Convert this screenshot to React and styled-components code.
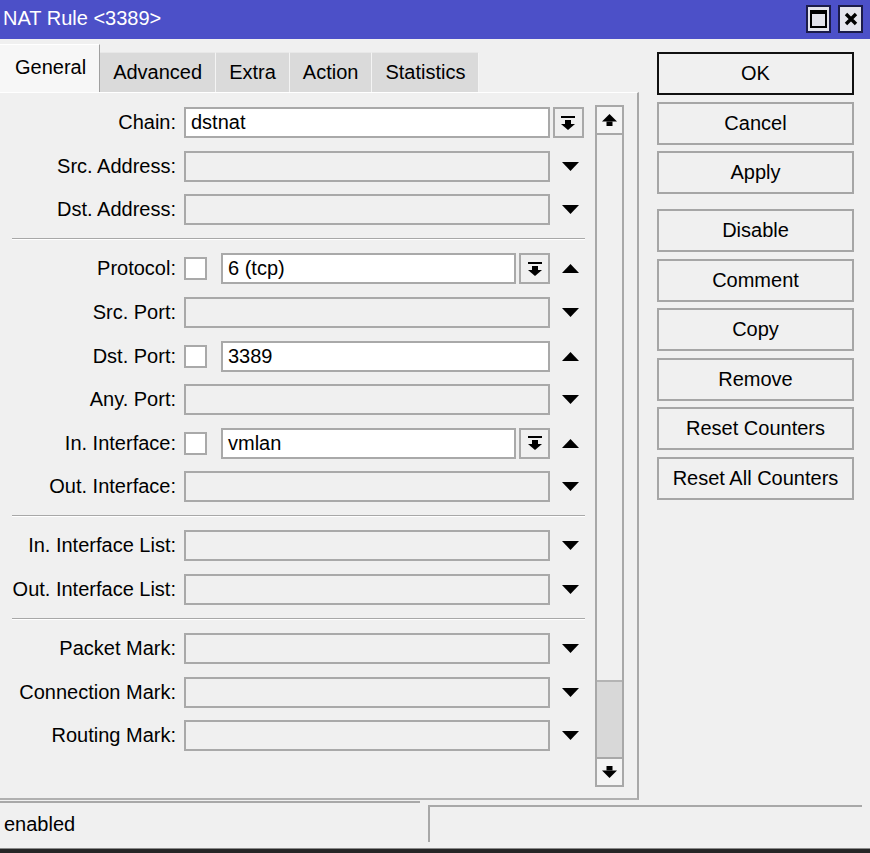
import React from 'react';
import styled, { createGlobalStyle } from 'styled-components';

const GlobalStyle = createGlobalStyle`
  html, body {
    margin: 0;
    padding: 0;
    background: #f0f0f0;
  }
  * {
    box-sizing: border-box;
  }
`;

const Window = styled.div`
  width: 870px;
  height: 853px;
  display: flex;
  flex-direction: column;
  background: #f0f0f0;
  font-family: "Liberation Sans", Arial, sans-serif;
  font-size: 20px;
  color: #000;
  overflow: hidden;
`;

const TitleBar = styled.div`
  height: 39px;
  flex-shrink: 0;
  display: flex;
  align-items: center;
  padding: 0 7px 2px 3px;
  background: #4c50c8;
  color: #fff;
`;

const TitleText = styled.div`
  flex: 1;
`;

const TitleButton = styled.div`
  width: 25px;
  height: 28px;
  margin-left: 7px;
  display: flex;
  align-items: center;
  justify-content: center;
  background: #e4e4ec;
  border: 2px solid #1c1c4a;
`;

const Main = styled.div`
  display: flex;
  padding-top: 5px;
  flex-shrink: 0;
`;

const LeftCol = styled.div`
  width: 639px;
  display: flex;
  flex-direction: column;
`;

const TabBar = styled.div`
  height: 48px;
  display: flex;
  align-items: flex-end;
`;

const Tab = styled.div`
  height: ${p => (p.$active ? '48px' : '40px')};
  padding: ${p => (p.$active ? '0 13px 2px 15px' : '0 13px')};
  display: flex;
  align-items: center;
  background: ${p => (p.$active ? '#f7f7f7' : '#dadada')};
  border-right: 1px solid ${p => (p.$active ? '#a0a0a0' : '#f4f4f4')};
  border-top: 1px solid ${p => (p.$active ? '#ffffff' : '#e8e8e8')};
`;

const Panel = styled.div`
  height: 708px;
  display: flex;
  border-top: 1px solid #ffffff;
  border-right: 2px solid #a8a8a8;
  border-bottom: 2px solid #b0b0b0;
`;

const Form = styled.div`
  width: 590px;
  padding-top: 8px;
  display: flex;
  flex-direction: column;
`;

const Row = styled.div`
  height: 43.6px;
  flex-shrink: 0;
  display: flex;
  align-items: center;
`;

const Label = styled.div`
  width: 176px;
  flex-shrink: 0;
  text-align: right;
  white-space: nowrap;
`;

const Field = styled.div`
  width: 366px;
  margin-left: 8px;
  display: flex;
  align-items: center;
`;

const Input = styled.div`
  flex: 1;
  height: 31px;
  padding-left: 5px;
  display: flex;
  align-items: center;
  background: ${p => (p.$filled ? '#ffffff' : '#f0f0f0')};
  border: 2px solid #a9a9a9;
  white-space: nowrap;
`;

const Check = styled.div`
  width: 23px;
  height: 23px;
  flex-shrink: 0;
  margin-right: 14px;
  background: #ffffff;
  border: 2px solid #a9a9a9;
`;

const DropButton = styled.div`
  width: 31px;
  height: 31px;
  flex-shrink: 0;
  margin-left: ${p => (p.$inside ? '3px' : '0')};
  display: flex;
  align-items: center;
  justify-content: center;
  background: #f0f0f0;
  border: 2px solid #a9a9a9;
`;

const ArrowCell = styled.div`
  width: 36px;
  display: flex;
  align-items: center;
  justify-content: center;
  padding-left: ${p => (p.$button ? '0' : '4px')};
`;

const Separator = styled.div`
  height: 15.4px;
  flex-shrink: 0;
  display: flex;
  align-items: center;
`;

const SepLine = styled.div`
  margin-left: 12px;
  width: 573px;
  border-top: 1px solid #a8a8a8;
  border-bottom: 1px solid #ffffff;
`;

const Scrollbar = styled.div`
  width: 29px;
  margin: 12px 0 11px 5px;
  display: flex;
  flex-direction: column;
  border: 2px solid #a8a8a8;
  background: #f0f0f0;
`;

const ScrollButton = styled.div`
  height: 28px;
  flex-shrink: 0;
  display: flex;
  align-items: center;
  justify-content: center;
  background: #f4f4f4;
  border-top: ${p => (p.$bottom ? '2px solid #a8a8a8' : 'none')};
  border-bottom: ${p => (p.$bottom ? 'none' : '2px solid #a8a8a8')};
`;

const Track = styled.div`
  flex: 1;
  display: flex;
  flex-direction: column;
  justify-content: flex-end;
`;

const Thumb = styled.div`
  height: 77px;
  background: #d8d8d8;
  border-top: 2px solid #b4b4b4;
`;

const RightCol = styled.div`
  width: 197px;
  margin-left: 18px;
  padding-top: 8px;
  display: flex;
  flex-direction: column;
`;

const Button = styled.div`
  height: 43px;
  margin-top: ${p => (p.$spaced ? '8.5px' : '0')};
  margin-bottom: 6.5px;
  display: flex;
  align-items: center;
  justify-content: center;
  background: #f0f0f0;
  border: 2px solid ${p => (p.$default ? '#111111' : '#a6a6a6')};
  white-space: nowrap;
`;

const StatusBar = styled.div`
  height: 48px;
  flex-shrink: 0;
  display: flex;
  padding: 1px 8px 6px 0;
  gap: 8px;
`;

const StatusField = styled.div`
  width: ${p => (p.$grow ? 'auto' : '420px')};
  flex: ${p => (p.$grow ? '1' : '0 0 auto')};
  margin-top: ${p => (p.$grow ? '4px' : '0')};
  padding: 4px 0 0 4px;
  display: flex;
  align-items: center;
  border-top: 2px solid #a8a8a8;
  border-left: ${p => (p.$grow ? '2px solid #a8a8a8' : 'none')};
`;

const BottomEdge = styled.div`
  height: 5px;
  flex-shrink: 0;
  background: #262626;
  border-top: 1px solid #8a8a8a;
`;

const DownTriangle = () => (
  <svg width="17" height="9" viewBox="0 0 17 9">
    <polygon points="0,0 17,0 8.5,9" fill="#000" />
  </svg>
);

const UpTriangle = () => (
  <svg width="17" height="9" viewBox="0 0 17 9">
    <polygon points="0,9 17,9 8.5,0" fill="#000" />
  </svg>
);

const DropIcon = () => (
  <svg width="14" height="14" viewBox="0 0 14 14">
    <rect x="0" y="0" width="14" height="2" fill="#000" />
    <rect x="4" y="4" width="6" height="4" fill="#000" />
    <polygon points="0,8 14,8 7,14" fill="#000" />
  </svg>
);

const ScrollUpIcon = () => (
  <svg width="15" height="12" viewBox="0 0 15 12">
    <polygon points="7.5,0 15,7.5 0,7.5" fill="#000" />
    <rect x="4.5" y="7.5" width="6" height="4.5" fill="#000" />
  </svg>
);

const ScrollDownIcon = () => (
  <svg width="15" height="12" viewBox="0 0 15 12">
    <rect x="4.5" y="0" width="6" height="4.5" fill="#000" />
    <polygon points="0,4.5 15,4.5 7.5,12" fill="#000" />
  </svg>
);

const MaximizeIcon = () => (
  <svg width="17" height="18" viewBox="0 0 17 18">
    <rect x="1" y="1" width="15" height="16" fill="none" stroke="#000" strokeWidth="2" />
    <rect x="1" y="1" width="15" height="3" fill="#000" />
  </svg>
);

const CloseIcon = () => (
  <svg width="14" height="14" viewBox="0 0 14 14">
    <path d="M2 2 L12 12 M12 2 L2 12" stroke="#000" strokeWidth="3.4" />
  </svg>
);

const groups = [
  [
    { label: 'Chain:', value: 'dstnat', drop: 'outside' },
    { label: 'Src. Address:' },
    { label: 'Dst. Address:' },
  ],
  [
    { label: 'Protocol:', value: '6 (tcp)', check: true, drop: 'inside' },
    { label: 'Src. Port:' },
    { label: 'Dst. Port:', value: '3389', check: true },
    { label: 'Any. Port:' },
    { label: 'In. Interface:', value: 'vmlan', check: true, drop: 'inside' },
    { label: 'Out. Interface:' },
  ],
  [
    { label: 'In. Interface List:' },
    { label: 'Out. Interface List:' },
  ],
  [
    { label: 'Packet Mark:' },
    { label: 'Connection Mark:' },
    { label: 'Routing Mark:' },
  ],
];

const tabs = ['General', 'Advanced', 'Extra', 'Action', 'Statistics'];

const buttons = [
  { text: 'OK', default: true },
  { text: 'Cancel' },
  { text: 'Apply' },
  { text: 'Disable', spaced: true },
  { text: 'Comment' },
  { text: 'Copy' },
  { text: 'Remove' },
  { text: 'Reset Counters' },
  { text: 'Reset All Counters' },
];

const FieldRow = ({ f }) => (
  <Row>
    <Label>{f.label}</Label>
    <Field>
      {f.check && <Check />}
      <Input $filled={!!f.value}>{f.value}</Input>
      {f.drop === 'inside' && (
        <DropButton $inside>
          <DropIcon />
        </DropButton>
      )}
    </Field>
    <ArrowCell $button={f.drop === 'outside'}>
      {f.drop === 'outside' ? (
        <DropButton>
          <DropIcon />
        </DropButton>
      ) : f.value ? (
        <UpTriangle />
      ) : (
        <DownTriangle />
      )}
    </ArrowCell>
  </Row>
);

const App = () => {
  return (
    <Window>
      <GlobalStyle />
      <TitleBar>
        <TitleText>NAT Rule &lt;3389&gt;</TitleText>
        <TitleButton>
          <MaximizeIcon />
        </TitleButton>
        <TitleButton>
          <CloseIcon />
        </TitleButton>
      </TitleBar>
      <Main>
        <LeftCol>
          <TabBar>
            {tabs.map((t, i) => (
              <Tab key={t} $active={i === 0}>
                {t}
              </Tab>
            ))}
          </TabBar>
          <Panel>
            <Form>
              {groups.map((g, gi) => (
                <React.Fragment key={gi}>
                  {gi > 0 && (
                    <Separator>
                      <SepLine />
                    </Separator>
                  )}
                  {g.map(f => (
                    <FieldRow key={f.label} f={f} />
                  ))}
                </React.Fragment>
              ))}
            </Form>
            <Scrollbar>
              <ScrollButton>
                <ScrollUpIcon />
              </ScrollButton>
              <Track>
                <Thumb />
              </Track>
              <ScrollButton $bottom>
                <ScrollDownIcon />
              </ScrollButton>
            </Scrollbar>
          </Panel>
        </LeftCol>
        <RightCol>
          {buttons.map(b => (
            <Button key={b.text} $default={b.default} $spaced={b.spaced}>
              {b.text}
            </Button>
          ))}
        </RightCol>
      </Main>
      <StatusBar>
        <StatusField>enabled</StatusField>
        <StatusField $grow />
      </StatusBar>
      <BottomEdge />
    </Window>
  );
};

export default App;
